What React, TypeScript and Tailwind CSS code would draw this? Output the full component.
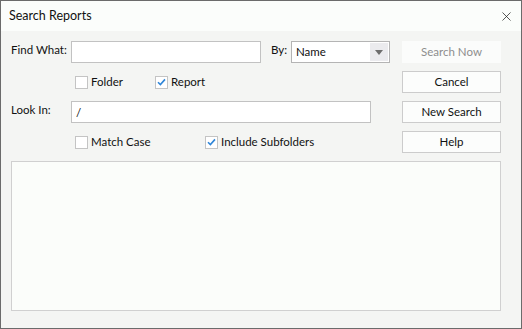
import { X } from 'lucide-react';

function Check({ checked, label, width }: { checked?: boolean; label: string; width?: string }) {
  return (
    <div className={`flex items-center gap-[3px] whitespace-nowrap ${width ?? ''}`}>
      <span className="flex h-[13px] w-[13px] items-center justify-center border border-[#c4c4c4] bg-white">
        {checked && (
          <svg width="9" height="8" viewBox="0 0 9 8">
            <path d="M1 4.2 L3.4 6.6 L8 1.4" fill="none" stroke="#2f86d8" strokeWidth="1.6" />
          </svg>
        )}
      </span>
      <span>{label}</span>
    </div>
  );
}

function Button({ label, disabled }: { label: string; disabled?: boolean }) {
  return (
    <button
      className={`h-[22px] w-full border text-[11.5px] ${
        disabled ? 'border-transparent bg-[#fbfcfb] text-[#8e8e8e]' : 'border-[#cccccc] bg-[#fcfdfc] text-[#111]'
      }`}
    >
      {label}
    </button>
  );
}

export default function App() {
  return (
    <div
      className="flex h-[329px] w-[522px] flex-col border border-[#6b6b6b] bg-[#f4f5f3] text-[11.5px] text-[#111]"
      style={{ fontFamily: 'Lato, "Noto Sans", sans-serif' }}
    >
      {/* Title bar */}
      <div className="flex h-[30px] items-center justify-between bg-[#fbfdfb] pl-[8px] pr-[7px]">
        <span className="text-[12.5px]">Search Reports</span>
        <X size={15} strokeWidth={1.2} className="text-[#222]" />
      </div>

      <div className="flex flex-1 flex-col pl-[10px] pr-[20px] pt-[10px]">
        <div className="flex">
          {/* Form */}
          <div className="flex flex-1 flex-col gap-[8px]">
            <div className="flex h-[22px] items-start whitespace-nowrap">
              <span className="w-[60px] leading-[18px]">Find What:</span>
              <input className="h-[22px] w-[190px] border border-[#c2c2c2] bg-white px-[4px] outline-none" />
              <span className="ml-[10px] w-[20px] leading-[18px]">By:</span>
              <div className="flex h-[22px] w-[99px] items-center border border-[#b4b4b4] bg-white pl-[4px] pr-[1px]">
                <span className="flex-1">Name</span>
                <span className="flex h-[18px] w-[18px] items-center justify-center bg-[#ebebee]">
                  <svg width="8" height="5" viewBox="0 0 8 5">
                    <path d="M0 0 H8 L4 5 Z" fill="#6e6e6e" />
                  </svg>
                </span>
              </div>
            </div>
            <div className="flex h-[22px] items-center pl-[64px]">
              <Check label="Folder" width="w-[80px]" />
              <Check label="Report" checked />
            </div>
            <div className="flex h-[22px] items-start whitespace-nowrap">
              <span className="w-[60px] leading-[18px]">Look In:</span>
              <input
                defaultValue="/"
                className="h-[22px] w-[300px] border border-[#c2c2c2] bg-white px-[4px] outline-none"
              />
            </div>
            <div className="flex h-[22px] items-center pl-[64px]">
              <Check label="Match Case" width="w-[130px]" />
              <Check label="Include Subfolders" checked />
            </div>
          </div>

          {/* Buttons */}
          <div className="flex w-[99px] flex-col gap-[8px]">
            <Button label="Search Now" disabled />
            <Button label="Cancel" />
            <Button label="New Search" />
            <Button label="Help" />
          </div>
        </div>

        {/* Results */}
        <div className="mt-[8px] h-[150px] border border-[#d0d0d0] bg-[#fbfdfa]" />
      </div>
    </div>
  );
}
